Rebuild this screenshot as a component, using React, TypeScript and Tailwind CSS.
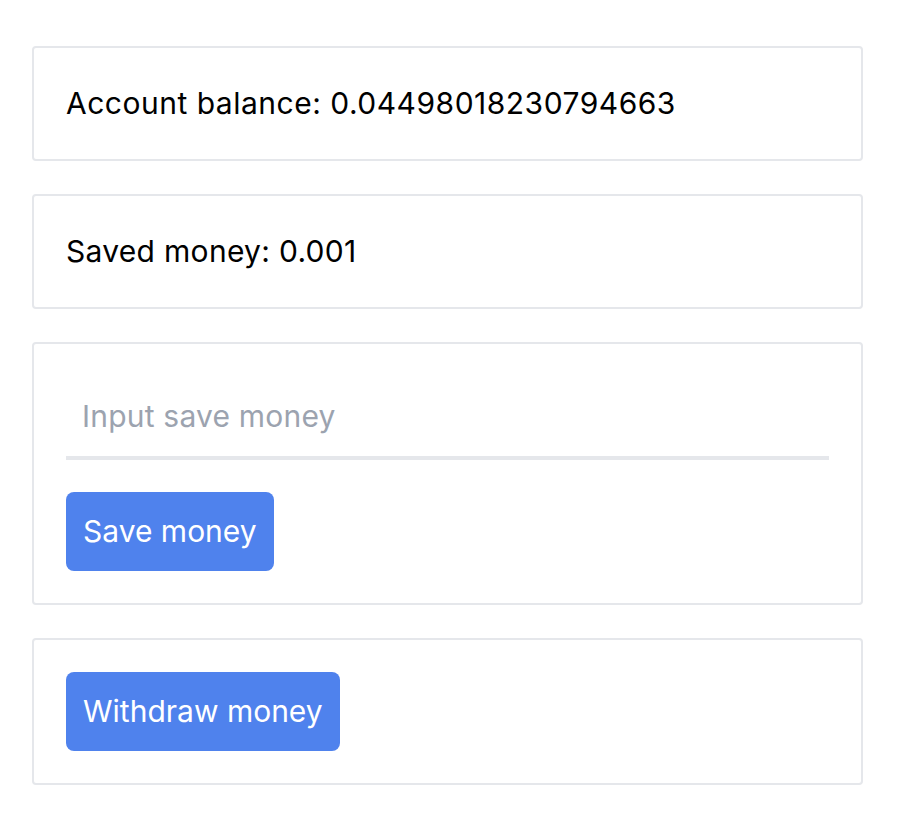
export default function App() {
  return (
    <div className="min-h-screen bg-white px-[32px] py-[46px] font-['Inter',sans-serif] text-[30px] text-black">
      <div className="flex w-[831px] flex-col gap-[33px]">
        <div className="rounded border-2 border-[#e5e7eb] px-8 py-[32px]">
          <p className="leading-[47px] tracking-[0.5px]">Account balance: 0.04498018230794663</p>
        </div>

        <div className="rounded border-2 border-[#e5e7eb] px-8 py-[32px]">
          <p className="leading-[47px] tracking-[0.3px]">Saved money: 0.001</p>
        </div>

        <div className="flex flex-col gap-8 rounded border-2 border-[#e5e7eb] p-8">
          <input
            type="text"
            placeholder="Input save money"
            className="h-[84px] w-full border-b-4 border-[#e5e7eb] px-4 tracking-[0.2px] outline-none placeholder:text-[#9ca3af]"
          />
          <div>
            <button className="h-[79px] rounded-lg bg-[#4f82ed] px-[17px] text-white">
              Save money
            </button>
          </div>
        </div>

        <div className="rounded border-2 border-[#e5e7eb] p-8">
          <button className="h-[79px] rounded-lg bg-[#4f82ed] px-[17px] text-white">
            Withdraw money
          </button>
        </div>
      </div>
    </div>
  );
}
